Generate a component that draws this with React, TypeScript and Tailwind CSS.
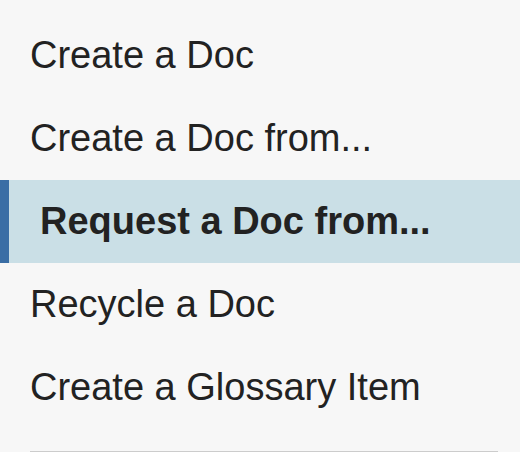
import React from 'react';

const items = [
  { label: 'Create a Doc' },
  { label: 'Create a Doc from...' },
  { label: 'Request a Doc from...', active: true },
  { label: 'Recycle a Doc' },
  { label: 'Create a Glossary Item' },
];

export default function App() {
  return (
    <div className="h-[452px] w-[520px] overflow-hidden bg-[#f7f7f7] pt-[14px] font-['Liberation_Sans',Arial,sans-serif] text-[38px] text-[#222]">
      <ul>
        {items.map(item => (
          <li
            key={item.label}
            className={
              item.active
                ? 'flex h-[83px] items-center border-l-[9px] border-[#3a6ea5] bg-[#cadfe6] pl-[31px] font-bold'
                : 'flex h-[83px] items-center pl-[30px]'
            }
          >
            {item.label}
          </li>
        ))}
      </ul>
      <div className="mx-[30px] mt-[22px] mr-[22px] border-t border-[#cccccc]" />
    </div>
  );
}
